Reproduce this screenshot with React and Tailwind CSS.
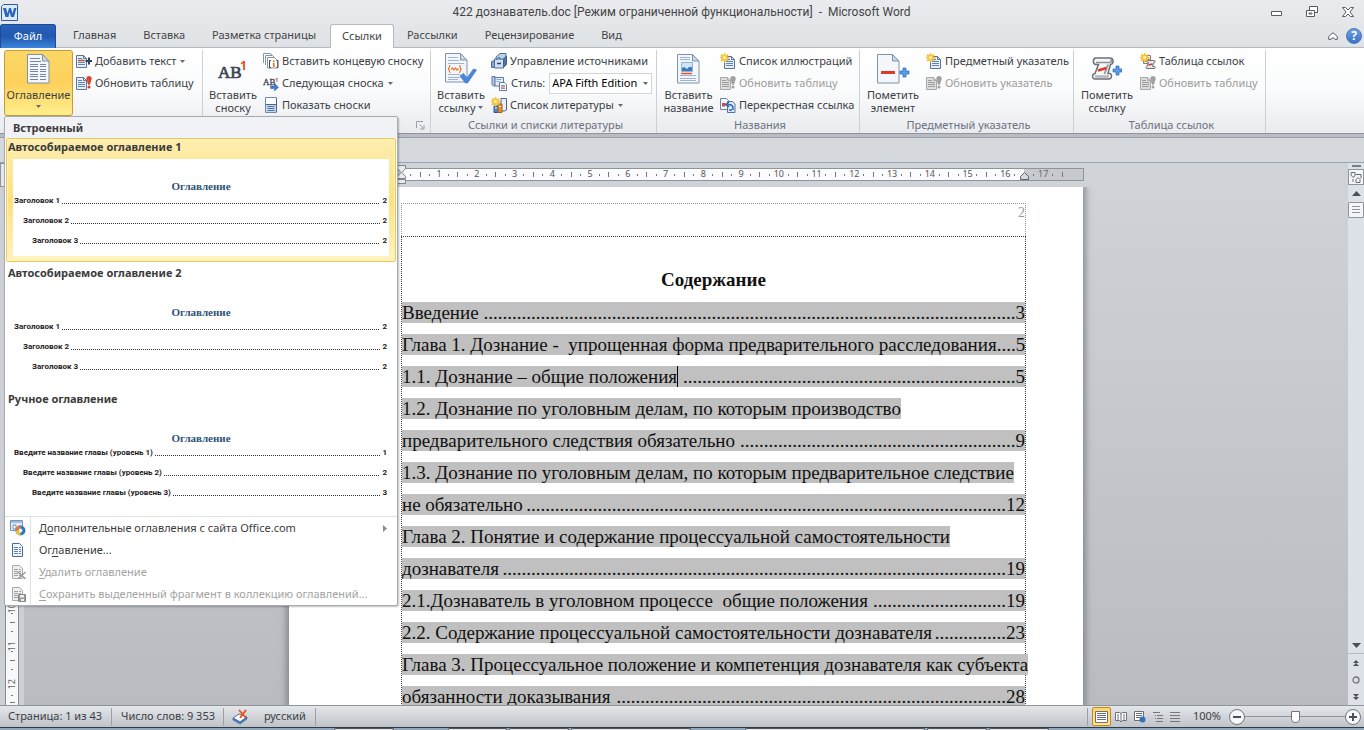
import React, { useState } from 'react';

const Svg = ({ size = 16, w, h, children, className = '' }) => (
  <svg width={w || size} height={h || size} viewBox={`0 0 ${w || size} ${h || size}`} fill="none" className={`shrink-0 ${className}`} aria-hidden="true">
    {children}
  </svg>
);

const Caret = ({ className = '' }) => (
  <svg width="5" height="3" viewBox="0 0 5 3" className={`shrink-0 ${className}`} aria-hidden="true">
    <path d="M0 0h5L2.5 3z" fill="#666a70" />
  </svg>
);

// ---------- shared icon pieces ----------

const SmallPage = ({ x = 0, y = 0, gray }) => (
  <g transform={`translate(${x} ${y})`}>
    <path d="M.5.5h7l3 3v9H.5z" fill={gray ? '#dedede' : '#e6eef8'} stroke={gray ? '#a9a9a9' : '#5f7591'} />
    <path d="M7.5.5v3h3" stroke={gray ? '#a9a9a9' : '#5f7591'} />
    <path d="M2 3.5h4M2 5.5h7M2 7.5h7M2 9.5h7" stroke={gray ? '#9c9c9c' : '#5f86b5'} />
  </g>
);

const Sparkle = () => (
  <g>
    <path d="M4.500 0l1 2.500 2.500-1-1 2.500 2.500.5-2.500 1 1 2.500-2.500-1-1 2.500-1-2.500-2.500 1 1-2.500L0 4.500l2-.5-1-2.500 2.500 1z" fill="#fbc936" stroke="#f0b82e" strokeWidth=".7" />
    <circle cx="4.500" cy="4.500" r="1.500" fill="#fff3b8" />
  </g>
);

const BigPage = ({ children }) => (
  <g>
    <path d="M.5.500h15l6.500 6.500v22H.5z" fill="#f3f7fc" stroke="#7f92ac" />
    <path d="M15.500.500V7H22z" fill="#c9d6e6" stroke="#7f92ac" />
    {children}
  </g>
);

// ---------- ribbon icons ----------

const TocIcon = () => (
  <Svg w={23} h={30}>
    <BigPage>
      <path d="M3 4.500h10M3 7.500h11M3 10.500h8M13 10.500h6M3 12.500h8M13 12.500h6M3 15.500h8M13 15.500h6M3 17.500h8M13 17.500h6M3 20.500h8M13 20.500h6M3 22.500h8M13 22.500h6M3 25.500h8M13 25.500h6" stroke="#7486a1" />
    </BigPage>
  </Svg>
);

const AddTextIcon = () => (
  <Svg>
    <SmallPage y={2} />
    <path d="M2 7.500h6" stroke="#d2493a" strokeWidth="1.500" />
    <path d="M13 4.500v7M9.500 8h6.500" stroke="#33415c" strokeWidth="2" />
  </Svg>
);

const UpdateIcon = ({ gray }) => (
  <Svg>
    <SmallPage y={2} gray={gray} />
    <path d="M13 1.500c2 0 2.500 1 2.300 2.500L13.600 9.500h-1.200L10.700 4c-.2-1.500.3-2.500 2.300-2.500z" fill={gray ? '#a2a2a2' : '#e0452e'} stroke={gray ? '#8f8f8f' : '#c03420'} strokeWidth=".6" />
    <circle cx="13" cy="12" r="1.500" fill={gray ? '#a2a2a2' : '#d8402b'} />
  </Svg>
);

const FootnoteIcon = () => (
  <Svg w={31} h={26}>
    <text x="0" y="22" fontSize="17" fontFamily="Liberation Serif, serif" fill="#3d4450" stroke="#3d4450" strokeWidth=".7">AB</text>
    <text x="22" y="14" fontSize="12" fontWeight="700" fontFamily="Noto Sans, sans-serif" fill="#e2511f">1</text>
  </Svg>
);

const EndnoteIcon = () => (
  <Svg>
    <path d="M.500 10V.500h7l2 2" fill="#fff" stroke="#8496ae" />
    <path d="M2.500 12V2.500h7l2 2" fill="#fff" stroke="#8496ae" />
    <path d="M4.500 14V4.500h7l3 3V15h-10z" fill="#fff" stroke="#8496ae" />
    <path d="M8 7.500H6.500v7H8M13.500 7.500H15v7h-1.500" stroke="#3d4450" />
    <path d="M10.800 10v4M10.800 7.500V9" stroke="#e2811f" strokeWidth="1.800" />
  </Svg>
);

const NextNoteIcon = () => (
  <Svg>
    <text x="0" y="10" fontSize="9" fontFamily="Liberation Serif, serif" fill="#3d4450" stroke="#3d4450" strokeWidth=".3">AB</text>
    <text x="12" y="7" fontSize="6" fontWeight="700" fontFamily="Noto Sans, sans-serif" fill="#e2511f">1</text>
    <path d="M7.500 11h4V8.500l4 3.800-4 3.700v-2.500h-4z" fill="#3f7fd0" stroke="#2c5fa5" strokeWidth=".5" />
  </Svg>
);

const ShowNotesIcon = () => (
  <Svg>
    <path d="M2.500.500h11v15h-11z" fill="#fdfeff" stroke="#7289a8" />
    <path d="M3 8h10v7H3z" fill="#c9d8ec" />
    <path d="M3 7.500h10M13.500 1v14" stroke="#4f6480" />
    <path d="M4.500 9.500h7M4.500 11.500h7M4.500 13.500h7" stroke="#4f76a8" />
  </Svg>
);

const CitationIcon = () => (
  <Svg w={32} h={32}>
    <BigPage>
      <path d="M3 4.500h10M3 7.500h11M3 10.500h16M3 21.500h12M3 24.500h12M3 26.500h10" stroke="#9db4d0" />
      <path d="M5.500 12.500c-2 0-.5 3-2.500 3.500 2 .5.500 3.500 2.500 3.500M14 12.500c2 0 .5 3 2.500 3.500-2 .5-.5 3.500-2.500 3.500M6 16.500l1.500-1.500 1.500 2 1.500-2 1.500 2 1.500-1.500" stroke="#e8762c" strokeWidth="1.200" />
    </BigPage>
    <path d="M15 23l3.500-2.500 3.500 4.500L28.500 16l3 1-9 13h-2z" fill="#4a86dd" stroke="#3b74c8" strokeWidth=".7" />
  </Svg>
);

const SourcesIcon = () => (
  <Svg>
    <path d="M5 4l4-3.500h6v9L12 12H5z" fill="#b9d2ee" stroke="#4f6f96" />
    <path d="M3.500 6h9v9h-9z" fill="#cfe0f4" stroke="#4f6f96" />
    <path d="M.500 8.500l3-1v7h-3zM5 7l3-3 2 3" fill="#7fa6d4" stroke="#4f6f96" />
    <path d="M12.500 6l3-3v8.500l-3 3z" fill="#53749f" stroke="#3f618c" />
    <path d="M6 10.500h4" stroke="#33415c" strokeWidth="1.500" />
  </Svg>
);

const StyleIcon = () => (
  <Svg>
    <path d="M1 1.500h3v9.500c-2 0-3-.5-3-2z" fill="#b7cbe4" stroke="#5a7aa5" />
    <path d="M4 2.500h8.500V11H4z" fill="#e4edf8" stroke="#5a7aa5" />
    <path d="M5.500 4.500h5M5.500 6.500h3" stroke="#8aa6c9" />
    <path d="M8.500 7.500h5l2 2v6h-7z" fill="#fff" stroke="#5a7aa5" />
    <path d="M10 10.500h4M10 13.500h4" stroke="#7a95b8" />
    <path d="M10 12h4" stroke="#d2493a" />
  </Svg>
);

const BibliographyIcon = () => (
  <Svg>
    <path d="M10 1.500h5.500V13l-2 1H10z" fill="#e8eef7" stroke="#51657f" />
    <path d="M3 9h4v6.500H3z" fill="#4c8ad0" stroke="#2f5c93" />
    <path d="M7 7h4v8.500H7z" fill="#e98d2c" stroke="#a9611a" />
    <path d="M4 11h2M8 9.500h2" stroke="#fff" />
    <Sparkle />
  </Svg>
);

const CaptionIcon = () => (
  <Svg w={23} h={30}>
    <BigPage>
      <path d="M3 3.500h10M3 5.500h10M3 21.500h16M3 24.500h16M3 26.500h16" stroke="#9db4d0" />
      <path d="M4.500 8.500h11v9h-11z" fill="#cfe6fa" stroke="#8fb4dc" />
      <path d="M5 17v-3l2-1 3 2 2-2h3v4z" fill="#3c78bd" />
      <path d="M4 19.500h11" stroke="#e2511f" strokeWidth="1.500" />
    </BigPage>
  </Svg>
);

const NewListIcon = () => (
  <Svg>
    <SmallPage x={4} y={3} />
    <Sparkle />
  </Svg>
);

const CrossRefIcon = () => (
  <Svg>
    <path d="M.500 1.500h6l2 2v9h-8z" fill="#f4f8fd" stroke="#6d84a3" />
    <path d="M7.500 4.500h5l2.500 2.500v8.500H7.500z" fill="#dfe9f6" stroke="#4f76a8" />
    <path d="M2 6h3.500v3.500H2z" fill="#d2493a" />
    <path d="M13 13c.5-4-1-5.500-5-5.500M9 5l-3 2.500 3 2.500" stroke="#2c62b3" strokeWidth="1.500" />
    <path d="M9 12h3v2H9z" fill="#4a86dd" />
  </Svg>
);

const BluePlus = ({ x, y }) => (
  <path transform={`translate(${x} ${y})`} d="M3 0h3v3h3v3H6v3H3V6H0V3h3z" fill="#5a9bec" stroke="#2c62b3" strokeWidth=".7" />
);

const MarkEntryIcon = () => (
  <Svg w={33} h={30}>
    <BigPage>
      <path d="M4 18.500h14" stroke="#dc3a22" strokeWidth="3" />
    </BigPage>
    <BluePlus x={23} y={14} />
  </Svg>
);

const MarkCitationIcon = () => (
  <Svg w={30} h={30}>
    <path d="M4 4h14c4 0 4 6 .5 6.500L16 19.500h1.500c3 0 2.500 5.500-.5 5.500H3c-3 0-3.500-5 0-5.500L6.500 10.500H4C.5 10.500.5 4 4 4z" fill="#f6f7f8" stroke="#6c7077" strokeWidth="1.500" />
    <path d="M4 8.500h14c2-.5 2-3.500 0-4" stroke="#8d9198" strokeWidth="1.500" />
    <path d="M3 22.500h14" stroke="#b3b7bc" strokeWidth="2.500" />
    <path d="M16 10.500l-3.500 9.500" stroke="#9a9ea5" strokeWidth="2" />
    <path d="M6 16.500l8.500-2.500" stroke="#dc3a22" strokeWidth="2.500" />
    <BluePlus x={21} y={12} />
  </Svg>
);

const AuthoritiesIcon = () => (
  <Svg>
    <path d="M3.500 2.500h7v8h-7z" fill="#fff" stroke="#7a7f88" />
    <path d="M5 4.500h4M5 8.500h3" stroke="#8a8f98" />
    <path d="M4.500 6.500h5" stroke="#dc3a22" strokeWidth="1.500" />
    <path d="M8 7.500h6c1.500 0 1.500 2 0 2l-1.500 4h2c1 0 1 2 0 2H7c-1.500 0-1.500-2 0-2l1.500-4H8c-1.500 0-1-2 0-2z" fill="#e6e8eb" stroke="#6c7077" />
    <path d="M8.500 12l4-1" stroke="#dc3a22" strokeWidth="1.500" />
    <Sparkle />
  </Svg>
);

// ---------- gallery footer icons ----------

const OfficeIcon = () => (
  <Svg>
    <path d="M.500.500h12v10H.500z" fill="#e3eefb" stroke="#7393bb" />
    <path d="M1 1h11v2H1z" fill="#9dbde4" />
    <path d="M3 5h3v4H3z" fill="#fff" stroke="#7393bb" />
    <circle cx="10.500" cy="10.500" r="5" fill="#2f78bd" />
    <path d="M5.500 10.500a5 5 0 0 1 5-5v5z" fill="#e8772c" />
    <path d="M10.500 15.500a5 5 0 0 1-5-5h5z" fill="#f2bf33" />
    <circle cx="10.500" cy="10.500" r="1.900" fill="#e8f1fa" />
  </Svg>
);

const TocPageIcon = ({ children, gray }) => (
  <Svg>
    <path d="M2.500 1.500h7l3 3v10h-10z" fill={gray ? '#eee' : '#f2f7fd'} stroke={gray ? '#aaa' : '#486a97'} />
    <path d="M4 5.500h4M9 5.500h2M4 7.500h4M9 7.500h2M4 9.500h4M9 9.500h2M4 11.500h4M9 11.500h2" stroke={gray ? '#a0a0a0' : '#5c82b3'} />
    {children}
  </Svg>
);

const menuItems = [
  { icon: <OfficeIcon />, pre: 'Д', key: 'о', post: 'полнительные оглавления с сайта Office.com', arrow: true },
  { icon: <TocPageIcon />, pre: 'Ог', key: 'л', post: 'авление...' },
  { icon: <TocPageIcon gray><path d="M8 8l7.500 7M15.500 8L8 15" stroke="#999" strokeWidth="1.500" /></TocPageIcon>, pre: '', key: 'У', post: 'далить оглавление', disabled: true },
  { icon: <TocPageIcon gray><path d="M8.500 8.500h7v7h-7z" fill="#999" stroke="#888" /><path d="M10 9h4v2.500h-4zM11 13h3v2h-3z" fill="#eee" /></TocPageIcon>, pre: '', key: 'С', post: 'охранить выделенный фрагмент в коллекцию оглавлений...', disabled: true },
];

const gallery = [
  { title: 'Автособираемое оглавление 1', lines: [['Заголовок 1', '2'], ['Заголовок 2', '2'], ['Заголовок 3', '2']] },
  { title: 'Автособираемое оглавление 2', lines: [['Заголовок 1', '2'], ['Заголовок 2', '2'], ['Заголовок 3', '2']] },
  { title: 'Ручное оглавление', lines: [['Введите название главы (уровень 1)', '1'], ['Введите название главы (уровень 2)', '2'], ['Введите название главы (уровень 3)', '3']] },
];

const indents = ['pl-px', 'pl-[10px]', 'pl-[19px]'];

const GalleryItem = ({ item, active, onHover }) => (
  <button
    type="button"
    onMouseEnter={onHover}
    className={`mb-[2px] flex h-[124px] w-full flex-col rounded-[2px] border px-[6px] text-left ${
      active
        ? 'border-[#f0c64e] bg-gradient-to-b from-[#fdeeb0] via-[#fde07f] to-[#fff3c0] shadow-[inset_0_0_0_1px_#fff4c8]'
        : 'border-transparent'
    }`}
  >
    <span className="-ml-[5px] h-5 text-[11px] leading-[16px] font-bold text-[#3b3b3b]">{item.title}</span>
    <span className="block h-[97px] w-full bg-white pt-[18px]">
      <span className="block text-center font-['Liberation_Serif',serif] text-[11px] leading-[18px] font-bold text-[#2d5378]">Оглавление</span>
      {item.lines.map(([text, page], i) => (
        <span key={text} className={`mb-2 flex h-3 items-center pr-[2px] font-[Roboto,sans-serif] text-[8px] leading-3 font-bold text-[#1c1c1c] ${indents[i]}`}>
          {text}
          <span className="mx-[2px] mt-1 h-px flex-1 bg-[repeating-linear-gradient(90deg,#333_0_1px,transparent_1px_2px)]" />
          {page}
        </span>
      ))}
    </span>
  </button>
);

const TocMenu = () => {
  const [hovered, setHovered] = useState(0);
  return (
    <div className="absolute top-[66px] left-0 z-20 w-[394px] rounded-[2px] border border-[#a7abb0] bg-white shadow-[1px_1px_2px_rgba(0,0,0,0.25)]">
      <div className="h-[21px] bg-[#f0f2f5] pl-2 text-[11px] leading-[21px] font-bold text-[#3b3b3b]">Встроенный</div>
      <div className="px-[1px]">
        {gallery.map((item, i) => (
          <GalleryItem key={item.title} item={item} active={hovered === i} onHover={() => setHovered(i)} />
        ))}
      </div>
      <div className="border-t border-[#e0e3e6]">
        {menuItems.map((m) => (
          <button key={m.post} type="button" disabled={m.disabled} className={`flex h-[22px] w-full items-center text-left text-[11px] ${m.disabled ? 'text-[#a3a3a3]' : 'text-[#3b3b3b]'}`}>
            <span className="flex h-full w-[26px] shrink-0 items-center justify-center border-r border-[#e0e3e6]">{m.icon}</span>
            <span className="flex-1 pl-2 whitespace-nowrap">{m.pre}<u className="underline-offset-2">{m.key}</u>{m.post}</span>
            {m.arrow && <svg width="4" height="7" viewBox="0 0 4 7" className="mr-[10px]"><path d="M0 0l4 3.500L0 7z" fill="#8a8a8a" /></svg>}
          </button>
        ))}
      </div>
    </div>
  );
};

// ---------- ribbon ----------

const Small = ({ icon, children, disabled, caret }) => (
  <button type="button" disabled={disabled} className={`flex h-[22px] items-center gap-[3px] text-[11px] whitespace-nowrap ${disabled ? 'text-[#9b9b9b]' : 'text-[#3b3f45]'}`}>
    {icon}
    {children}
    {caret && <Caret className="ml-[1px]" />}
  </button>
);

const Big = ({ icon, top, bottom, caret, className = '' }) => (
  <button type="button" className={`flex shrink-0 flex-col items-center text-[11px] leading-[13px] text-[#3b3f45] ${className}`}>
    <span className="flex h-[38px] items-center justify-center">{icon}</span>
    <span className="whitespace-nowrap">{top}</span>
    <span className="flex items-center gap-[3px]">{bottom}{caret && <Caret />}</span>
  </button>
);

const Group = ({ label, className, children }) => (
  <div className={`flex shrink-0 flex-col border-r border-[#cdd1d6] ${className}`}>
    <div className="flex h-[68px] items-start">{children}</div>
    <div className="text-center text-[11px] leading-[13px] text-[#6b7280]">{label}</div>
  </div>
);

const Ribbon = () => (
  <div className="flex h-[85px] shrink-0 bg-gradient-to-b from-white via-[#fafbfc] to-[#e9ebee] pt-[2px]">
    <Group className="w-[203px] pl-1">
      <div className="relative">
        <button type="button" className="flex h-[66px] w-[69px] flex-col items-center rounded-[3px] border border-[#c59a3e] bg-gradient-to-b from-[#fcd766] via-[#fdd15a] to-[#ffee8e] pt-[3px] text-[11px] leading-[13px] text-[#3b3f45]">
          <TocIcon />
          <span className="mt-1">Оглавление</span>
          <Caret className="mt-1" />
        </button>
        <TocMenu />
      </div>
      <div className="pl-[3px]">
        <Small icon={<AddTextIcon />} caret>Добавить текст</Small>
        <Small icon={<UpdateIcon />}>Обновить таблицу</Small>
      </div>
    </Group>
    <Group className="relative w-[228px] pl-1">
      <Big className="w-[52px]" icon={<FootnoteIcon />} top="Вставить" bottom="сноску" />
      <div className="pl-1">
        <Small icon={<EndnoteIcon />}>Вставить концевую сноску</Small>
        <Small icon={<NextNoteIcon />} caret>Следующая сноска</Small>
        <Small icon={<ShowNotesIcon />}>Показать сноски</Small>
      </div>
      <button type="button" aria-label="Параметры сносок" className="absolute right-[5px] bottom-[3px]">
        <Svg size={9}><path d="M.500 7V.500H7" stroke="#9a9fa6" /><path d="M3.500 3.500l4 4M8 4v4H4" stroke="#9a9fa6" /></Svg>
      </button>
    </Group>
    <Group className="w-[226px] pl-1" label="Ссылки и списки литературы">
      <Big className="w-[52px]" icon={<CitationIcon />} top="Вставить" bottom="ссылку" caret />
      <div className="pl-1">
        <Small icon={<SourcesIcon />}>Управление источниками</Small>
        <div className="flex h-[22px] items-center gap-[3px] text-[11px] text-[#3b3f45]">
          <StyleIcon />
          <label htmlFor="style" className="pl-[1px]">Стиль:</label>
          <span className="relative ml-[1px]">
            <select id="style" className="block h-[21px] w-[103px] appearance-none border border-[#d2d6da] bg-white pl-[2px] text-[11px] text-black">
              <option>APA Fifth Edition</option>
            </select>
            <Caret className="pointer-events-none absolute top-[9px] right-1" />
          </span>
        </div>
        <Small icon={<BibliographyIcon />} caret>Список литературы</Small>
      </div>
    </Group>
    <Group className="w-[203px] pl-1" label="Названия">
      <Big className="w-[55px]" icon={<CaptionIcon />} top="Вставить" bottom="название" />
      <div className="pl-1">
        <Small icon={<NewListIcon />}>Список иллюстраций</Small>
        <Small icon={<UpdateIcon gray />} disabled>Обновить таблицу</Small>
        <Small icon={<CrossRefIcon />}>Перекрестная ссылка</Small>
      </div>
    </Group>
    <Group className="w-[214px] pl-1" label="Предметный указатель">
      <Big className="w-[58px]" icon={<MarkEntryIcon />} top="Пометить" bottom="элемент" />
      <div className="pl-1">
        <Small icon={<NewListIcon />}>Предметный указатель</Small>
        <Small icon={<UpdateIcon gray />} disabled>Обновить указатель</Small>
      </div>
    </Group>
    <Group className="w-[192px] pl-1" label="Таблица ссылок">
      <Big className="w-[58px]" icon={<MarkCitationIcon />} top="Пометить" bottom="ссылку" />
      <div className="pl-1">
        <Small icon={<AuthoritiesIcon />}>Таблица ссылок</Small>
        <Small icon={<UpdateIcon gray />} disabled>Обновить таблицу</Small>
      </div>
    </Group>
  </div>
);

const tabs = ['Главная', 'Вставка', 'Разметка страницы', 'Ссылки', 'Рассылки', 'Рецензирование', 'Вид'];

const Header = () => (
  <header className="shrink-0 bg-gradient-to-b from-[#e9ebee] to-[#dfe2e5]">
    <div className="flex h-6 items-center pl-[1px]">
      <Svg size={17}>
        <path d="M.500 2.500l2-2h14v16H.500z" fill="#dfeaf8" stroke="#2d5d9f" />
        <path d="M2 4l2.500 9h3L8.500 8l1.500 5h3L15.500 4h-2.500l-1.500 5.500L10 4H8L6.500 9.500 5 4z" fill="#2a67b8" />
      </Svg>
      <h1 className="flex-1 pl-[74px] text-center font-[Roboto,sans-serif] text-[12px] whitespace-pre text-[#444]">422 дознаватель.doc [Режим ограниченной функциональности]  -  Microsoft Word</h1>
      <div className="flex items-center gap-6 pr-[10px]">
        <button type="button" aria-label="Свернуть"><Svg w={11} h={12}><path d="M.500 5.500h10v4H.500z" fill="#fff" stroke="#565c66" /></Svg></button>
        <button type="button" aria-label="Свернуть в окно"><Svg size={12}><path d="M3.500.500h8v6h-8z" fill="#fff" stroke="#565c66" /><path d="M.500 4.500h8v6h-8z" fill="#fff" stroke="#565c66" /><path d="M3 7h3v1H3z" stroke="#565c66" /></Svg></button>
        <button type="button" aria-label="Закрыть"><Svg w={12} h={11}><path d="M.500.500h3L6 3 8.500.500h3L8 5l3.500 4.500h-3L6 7 3.500 9.500h-3L4 5z" fill="#fff" stroke="#565c66" /></Svg></button>
      </div>
    </div>
    <nav className="flex h-6 border-b border-[#b4b9c0] text-[11px] text-[#444]">
      <button type="button" className="h-6 w-14 rounded-t-[3px] border border-b-0 border-[#1f4a94] bg-gradient-to-b from-[#2a62b8] via-[#2258b0] to-[#3a86dc] text-white">Файл</button>
      <div className="flex pl-1">
        {tabs.map((tab) => (
          <button
            key={tab}
            type="button"
            className={tab === 'Ссылки' ? 'h-6 rounded-t-[3px] border border-b-0 border-[#b4b9c0] bg-white px-[11px]' : 'h-[23px] pr-[14px] pl-[13px]'}
          >
            {tab}
          </button>
        ))}
      </div>
      <div className="ml-auto flex items-center gap-2 pr-[2px]">
        <button type="button" aria-label="Свернуть ленту"><Svg w={10} h={8}><path d="M.700 4.500L5 .700l4.300 3.800v2.800H7L5 5.500 3 7.300H.700z" fill="#fff" stroke="#565c66" /></Svg></button>
        <button type="button" aria-label="Справка" className="size-4 rounded-full border border-[#4478c0] bg-gradient-to-b from-[#6ea2e2] to-[#3a72c4] text-[12px] leading-[14px] font-bold text-white">?</button>
      </div>
    </nav>
  </header>
);

// ---------- ruler: four marks per centimetre ----------

const Mark = ({ q, gray }) => {
  if (q % 4 === 0) return <span className="flex flex-1 basis-0 justify-center overflow-visible"><span className={`-mx-2 text-[9px] leading-[10px] ${gray ? 'text-[#666]' : 'text-[#555]'}`}>{q / 4}</span></span>;
  if (q % 2 === 0) return <span className="flex flex-1 basis-0 items-center justify-center"><span className="h-[5px] w-px bg-[#777]" /></span>;
  return <span className="flex flex-1 basis-0 items-center justify-center"><span className="h-[2px] w-px bg-[#777]" /></span>;
};

const range = (from, to) => Array.from({ length: to - from + 1 }, (_, i) => from + i);

const Ruler = () => (
  <div className="mx-auto mt-[5px] mb-[6px] flex h-[13px] w-[796px] border border-[#8e949c] bg-[#c6cace]">
    <div className="relative flex w-[113px] shrink-0 justify-end">
      <Svg w={9} h={20} className="absolute -top-1 -right-[4px] z-10"><path d="M.500.500h8v3L5 7.500l3.500 4v2h-8v-2l3.500-4-3.500-4zM.500 14.500h8v4h-8z" fill="#e8eaec" stroke="#80868e" /></Svg>
    </div>
    <div className="flex flex-1 bg-[#fbfcfd] pr-[5px] pl-1">
      {range(1, 65).map((q) => <Mark key={q} q={q} />)}
    </div>
    <div className="relative flex w-[59px] pr-4 pl-[5px]">
      <Svg w={9} h={8} className="absolute -left-1 top-[3px]"><path d="M.500 7.500V4.500l4-4 4 4v3z" fill="#d5d8db" stroke="#5d636b" /></Svg>
      {range(67, 70).map((q) => <Mark key={q} q={q} gray />)}
    </div>
  </div>
);

const VerticalRuler = () => (
  <div className="ml-[5px] flex h-full w-[14px] flex-col items-center overflow-hidden border-x border-[#7f8a98] bg-[#f6f8fa] pt-[46px]">
    {range(1, 12).map((n) => (
      <div key={n} className="flex h-[38px] shrink-0 flex-col items-center justify-between text-[#666]">
        <span className="h-px w-[2px] bg-[#777]" />
        <span className="h-px w-[5px] bg-[#777]" />
        <span className="h-px w-[2px] bg-[#777]" />
        <span className="text-[9px] leading-[12px] [writing-mode:vertical-rl] rotate-180">{n}</span>
      </div>
    ))}
    <div className="flex h-5 shrink-0 flex-col items-center justify-evenly">
      <span className="h-px w-[2px] bg-[#777]" />
      <span className="h-px w-[5px] bg-[#777]" />
    </div>
  </div>
);

// ---------- document ----------

const toc = [
  { text: 'Введение', page: '3', dots: 112 },
  { text: 'Глава 1. Дознание -\u00a0 упрощенная форма предварительного расследования.', page: '5', dots: 3 },
  { text: '1.1. Дознание – общие положения', page: '5', dots: 70, cursor: true },
  { text: '1.2. Дознание по уголовным делам, по которым производство' },
  { text: 'предварительного следствия обязательно', page: '9', dots: 58 },
  { text: '1.3. Дознание по уголовным делам, по которым предварительное следствие' },
  { text: 'не обязательно', page: '12', dots: 101 },
  { text: 'Глава 2. Понятие и содержание процессуальной самостоятельности' },
  { text: 'дознавателя', page: '19', dots: 106 },
  { text: '2.1.Дознаватель в уголовном процессе\u00a0 общие положения', page: '19', dots: 28 },
  { text: '2.2. Содержание процессуальной самостоятельности дознавателя', page: '23', dots: 15 },
  { text: 'Глава 3. Процессуальное положение и компетенция дознавателя как субъекта' },
  { text: 'обязанности доказывания', page: '28', dots: 82 },
];

const TocLine = ({ text, page, dots, cursor }) => (
  <li className="flex h-8 items-center">
    <a href="#toc" className={`flex h-[21px] items-center bg-[#c0c0c0] leading-[21px] whitespace-nowrap ${page ? 'w-full justify-between' : ''}`}>
      <span className={cursor ? 'border-r border-black' : ''}>{text}</span>
      {page && <span>{'.'.repeat(dots)}{page}</span>}
    </a>
  </li>
);

const Page = () => (
  <div className="mx-auto h-full w-[794px] overflow-hidden bg-white pt-4 pr-[57px] pl-[112px] font-['Liberation_Serif',serif] text-[19px] text-[#111] shadow-[0_0_6px_3px_rgba(100,105,112,0.6)]">
    <div className="h-[33px] border border-b-0 border-dotted border-[#999] text-right text-[14px] leading-[18px] text-[#999]">2</div>
    <div className="h-full border border-dotted border-[#444] pt-[27px]">
      <h2 className="h-8 text-center leading-8 font-bold">Содержание</h2>
      <ul id="toc">
        {toc.map((line) => <TocLine key={line.text} {...line} />)}
      </ul>
    </div>
  </div>
);

const ScrollBar = () => (
  <div className="flex w-4 shrink-0 flex-col items-center bg-[#dde1e8] pt-[2px]">
    <div className="h-[2px] w-[9px] bg-[#7a7f87]" />
    <button type="button" aria-label="Линейка" className="mt-[2px] flex h-4 w-4 items-center justify-center border border-[#8e949c] bg-[#f4f5f7]">
      <Svg size={12}><path d="M1 4V1.500h4V5L3 6.500zM6 3.500h5v4M3 8v3M6 8.500l2-2 2 2v3H6z" stroke="#666c75" /></Svg>
    </button>
    <button type="button" aria-label="Вверх" className="flex h-[17px] items-center"><Svg w={9} h={5}><path d="M4.500 0L9 5H0z" fill="#4b5058" /></Svg></button>
    <div className="flex h-4 w-4 items-center justify-center rounded-[1px] border border-[#8e949c] bg-[#f4f5f7]">
      <Svg size={8}><path d="M0 .500h8M0 3.500h8M0 6.500h8" stroke="#8e949c" /></Svg>
    </div>
    <div className="flex-1" />
    <button type="button" aria-label="Вниз" className="flex h-4 w-full items-center justify-center border-b border-[#b4b9c0]"><Svg w={9} h={5}><path d="M0 0h9L4.500 5z" fill="#4b5058" /></Svg></button>
    <button type="button" aria-label="Предыдущая страница" className="flex h-[17px] items-center"><Svg size={6}><path d="M3 0l3 3H0zM3 3l3 3H0z" fill="#4b5058" /></Svg></button>
    <button type="button" aria-label="Выбор объекта перехода" className="flex h-[17px] items-center"><Svg size={8}><circle cx="4" cy="4" r="3" stroke="#70757d" strokeWidth="1.300" /></Svg></button>
    <button type="button" aria-label="Следующая страница" className="flex h-[17px] items-center"><Svg size={6}><path d="M0 0h6L3 3zM0 3h6L3 6z" fill="#4b5058" /></Svg></button>
  </div>
);

const ReadIcon = () => <Svg w={12} h={12}><path d="M.500 1.500h4l1.500 1 1.500-1h4v8h-4L6 11 4.500 9.500h-4zM6 2.500V11M2 4h2M2 6h2M2 8h2M8 4h2M8 6h2M8 8h2" stroke="#6a6f77" fill="#fff" /></Svg>;
const WebIcon = () => <Svg w={12} h={12}><path d="M.500.500h9v9h-9z" fill="#fff" stroke="#6a6f77" /><path d="M2 2.500h6M2 4.500h6M2 6.500h4" stroke="#6a6f77" /><circle cx="8.500" cy="8.500" r="3" fill="#2f74b5" /></Svg>;
const OutlineIcon = () => <Svg w={10} h={10}><path d="M0 .500h7M2 3.500h1M4 3.500h6M2 6.500h1M4 6.500h6M3 9.500h7" stroke="#777" /></Svg>;
const DraftIcon = () => <Svg w={10} h={10}><path d="M0 .500h10M0 3.500h10M0 6.500h10M0 9.500h10" stroke="#777" /></Svg>;

const Sep = () => <span className="h-[18px] w-px bg-[#9ba0a7]" />;

const StatusBar = () => {
  const [zoom, setZoom] = useState(50);
  return (
    <footer className="flex h-[22px] shrink-0 items-center border-t border-[#8e949c] bg-gradient-to-b from-[#e4e7ea] to-[#bfc3c8] text-[11px] text-[#3b3f45]">
      <span className="pr-[9px] pl-2">Страница: 1 из 43</span>
      <Sep />
      <span className="pr-2 pl-[9px]">Число слов: 9 353</span>
      <Sep />
      <button type="button" aria-label="Проверка правописания" className="pl-2">
        <Svg><path d="M1 9l6-4 8 3-7 5z" fill="#fff" stroke="#54749e" /><path d="M1 9v2l7 4 7-5V8l-7 5z" fill="#4b86cf" stroke="#2f5c93" strokeWidth=".6" /><path d="M7 1l7 8M14 1L8 9" stroke="#e2511f" strokeWidth="1.800" /></Svg>
      </button>
      <span className="pr-[9px] pl-4">русский</span>
      <Sep />
      <div className="ml-auto flex items-center">
        <Sep />
        <button type="button" aria-label="Разметка страницы" className="ml-1 flex size-[19px] items-center justify-center rounded-[2px] border border-[#c2862f] bg-gradient-to-b from-[#fdd765] to-[#ffe98a]">
          <Svg w={13} h={12}><path d="M.500.500h12v11H.500z" fill="#fff" stroke="#6a6f77" /><path d="M2 2.500h9M2 4.500h9M2 6.500h9M2 8.500h9" stroke="#6a6f77" /></Svg>
        </button>
        <div className="flex items-center gap-[7px] pl-1">
          <button type="button" aria-label="Режим чтения"><ReadIcon /></button>
          <button type="button" aria-label="Веб-документ"><WebIcon /></button>
          <button type="button" aria-label="Структура"><OutlineIcon /></button>
          <button type="button" aria-label="Черновик"><DraftIcon /></button>
        </div>
        <span className="pr-2 pl-[13px]">100%</span>
        <button type="button" aria-label="Уменьшить" className="flex size-4 items-center justify-center rounded-full border border-[#70757d] bg-[#f6f7f8]"><span className="h-[2px] w-[8px] bg-[#4b5058]" /></button>
        <input
          type="range"
          aria-label="Масштаб"
          value={zoom}
          onChange={(e) => setZoom(e.target.value)}
          className="h-4 w-[100px] appearance-none bg-[linear-gradient(#8e949c,#8e949c)] bg-[length:100%_1px] bg-center bg-no-repeat [&::-webkit-slider-thumb]:h-3 [&::-webkit-slider-thumb]:w-[9px] [&::-webkit-slider-thumb]:appearance-none [&::-webkit-slider-thumb]:rounded-b-[4px] [&::-webkit-slider-thumb]:border [&::-webkit-slider-thumb]:border-[#70757d] [&::-webkit-slider-thumb]:bg-white"
        />
        <button type="button" aria-label="Увеличить" className="mr-[3px] flex size-4 items-center justify-center rounded-full border border-[#70757d] bg-[#f6f7f8]">
          <Svg size={10}><path d="M5 1v8M1 5h8" stroke="#4b5058" strokeWidth="2" /></Svg>
        </button>
      </div>
    </footer>
  );
};

const Task = ({ className }) => <span className={`h-full rounded-t-[3px] border border-b-0 border-[#50565e] bg-[#e4e4e4] ${className}`} />;

const TaskBar = () => (
  <div className="flex h-[3px] shrink-0 gap-[2px] overflow-hidden border-t border-[#333a42] bg-[#8fa6bd] pl-[334px]">
    <Task className="w-[60px]" />
    <Task className="ml-[52px] w-[59px]" />
    <Task className="w-[60px]" />
    <Task className="w-[120px]" />
    <Task className="ml-[52px] w-[180px]" />
    <Task className="w-[60px]" />
    <Task className="w-[60px]" />
  </div>
);

const App = () => (
  <div className="flex h-screen flex-col overflow-hidden bg-[#cfd3d7] font-['Noto_Sans',sans-serif]">
    <Header />
    <Ribbon />
    {/* seam under the ribbon and the empty band above the ruler */}
    <div className="h-1 shrink-0 border-t border-[#8e949c] bg-[#b9bdc3]" />
    <div className="h-[26px] shrink-0 border-t border-b border-t-[#9ba0a7] border-b-[#93a5b7] bg-[#d5d9de]" />
    <main className="flex min-h-0 flex-1">
      <div className="flex w-6 shrink-0 flex-col bg-[#ccd0d5]">
        <div className="h-6 w-[14px] border border-[#8e949c] bg-[#e6e8ea]" />
        <div className="min-h-0 flex-1"><VerticalRuler /></div>
      </div>
      <div className="flex min-w-0 flex-1 flex-col bg-gradient-to-b from-[#d0d4d8] to-[#b8bcc1]">
        <Ruler />
        <div className="min-h-0 flex-1 overflow-hidden"><Page /></div>
      </div>
      <ScrollBar />
    </main>
    <StatusBar />
    <TaskBar />
  </div>
);

export default App;
